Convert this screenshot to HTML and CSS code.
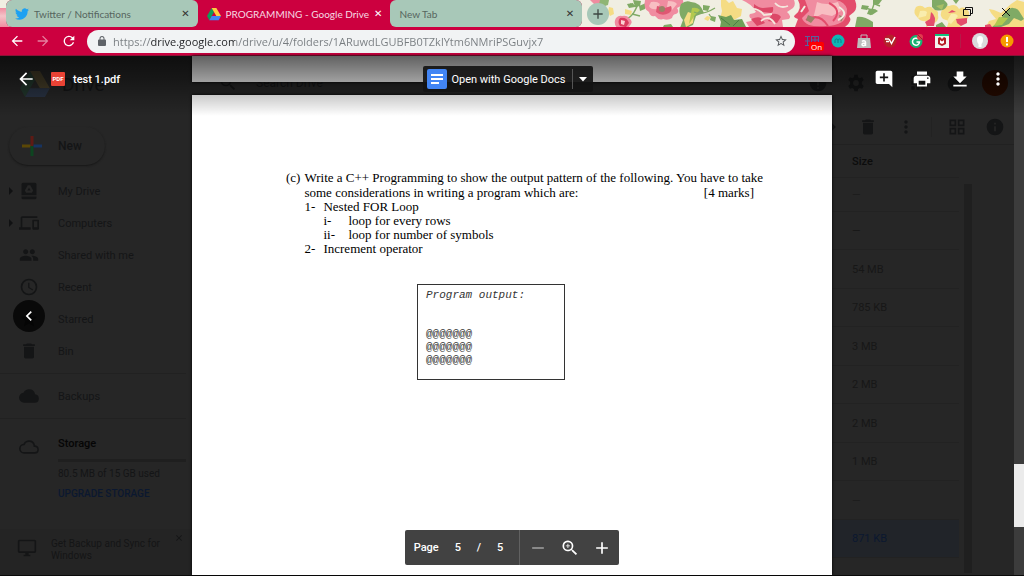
FILE: index.html
```html
<!DOCTYPE html>
<html lang="en">
<head>
    <meta charset="UTF-8">
    <meta name="viewport" content="width=device-width, initial-scale=1.0">
    <title>PROGRAMMING - Google Drive</title>
    <link rel="stylesheet" href="styles.css">
</head>
<body>
    <!-- Shared icons -->
    <svg class="symbols" aria-hidden="true">
        <symbol id="i-back" viewBox="0 0 24 24"><path d="M20 11H7.83l5.59-5.59L12 4l-8 8 8 8 1.41-1.41L7.83 13H20v-2z"/></symbol>
        <symbol id="i-close" viewBox="0 0 24 24"><path d="M19 6.41L17.59 5 12 10.59 6.41 5 5 6.41 10.59 12 5 17.59 6.41 19 12 13.41 17.59 19 19 17.59 13.41 12z"/></symbol>
        <symbol id="i-plus" viewBox="0 0 24 24"><path d="M19 13h-6v6h-2v-6H5v-2h6V5h2v6h6v2z"/></symbol>
        <symbol id="i-more" viewBox="0 0 24 24"><path d="M12 8c1.1 0 2-.9 2-2s-.9-2-2-2-2 .9-2 2 .9 2 2 2zm0 2c-1.1 0-2 .9-2 2s.9 2 2 2 2-.9 2-2-.9-2-2-2zm0 6c-1.1 0-2 .9-2 2s.9 2 2 2 2-.9 2-2-.9-2-2-2z"/></symbol>
        <symbol id="i-bin" viewBox="0 0 24 24"><path d="M6 19c0 1.1.9 2 2 2h8c1.1 0 2-.9 2-2V7H6v12zM19 4h-3.5l-1-1h-5l-1 1H5v2h14V4z"/></symbol>
        <symbol id="i-drive" viewBox="0 0 24 21"><path fill="#0f9d58" d="M8 0l4 7-8 14-4-7z"/><path fill="#ffcd40" d="M8 0h8l8 14h-8z"/><path fill="#4285f4" d="M8 14h16l-4 7H4z"/></symbol>
    </svg>

    <header class="tabstrip">
        <svg class="theme" viewBox="574 0 450 27" preserveAspectRatio="xMaxYMin slice" aria-hidden="true">
            <rect x="574" width="450" height="27" fill="#f0eee2"/>
            <path fill="#f08ca0" d="M590 0h12l-2 4-5 1z"/>
            <path fill="#8fb574" d="M600 0h9l-1 5-6 2-3-3z"/>
            <path fill="#f5dc84" d="M609 7l4 1 1 6-4 2-2-4zM625 9l7 2-1 4-6-1z"/>
            <path fill="none" stroke="#80aa65" stroke-width="1.5" d="M625 19c7-1 10-8 14-17M632 14l8 2M637 7l-7-3"/>
            <path fill="#80aa65" d="M633 0l8 1-1 5-5 1zM639 6l7-3-1 6-5 2zM627 4l6-1 2 4-6 1z"/>
            <path fill="#f08ca0" d="M616 18q3-3 6-2 5-1 7 2 4 3 2 6l-3 4h-11q-4-5-1-10z"/>
            <path fill="#d93d5e" d="M620 18q7-1 9 5l-3 4-6-1q-3-4 0-8z"/><path fill="#fbd0d2" d="M621 20l4 1-1 4-3-1z"/>
            <path fill="#f08ca0" d="M645 0h38q1 4-2 6l-4 2q3 4-1 6-3 0-4 4-4 3-9 1-4 2-8-3-5 1-6-4-6-3-4-12z"/>
            <path fill="#f8bec2" d="M651 2q6-1 9 2l-3 5q-6 1-8-3zM668 1q7 0 9 3l-5 6-5-3z"/>
            <path fill="#df5772" d="M657 6l8 2 6-2q2 4-2 7-7 4-13-1z"/><circle cx="662" cy="9" r="3" fill="#998367"/>
            <path fill="#80aa65" d="M681 4q5-4 10-2 9 0 13 11l-8 3-3 9-7 3h-6l3-8q-6-7-2-16z"/>
            <path fill="#f5dc84" d="M688 12l6 2-1 9-7 4-2-7z"/><path fill="#b2c94f" d="M692 8q5-1 8 2l-5 5-6 9z"/>
            <path fill="none" stroke="#80aa65" stroke-width="1.3" d="M694 12q8 4 21-4M709 14l4 6"/>
            <path fill="#80aa65" d="M703 5l7 1-2 5-5-1zM711 16l5 1-1 5-5-2zM664 25l7-1 2 3h-10z"/>
            <path fill="#f5dc84" d="M721 0h5l3 3 4-2 4 7 5 1-1 7-7 4-7-2-7 1 2-8-1-5zM707 16l4 1-3 4-4-2z"/>
            <path fill="#6f9e57" d="M718 15l8 2 5-2 3 5 8-1 4 8h-26l1-5z"/>
            <path stroke="#4c7e44" d="M721 18l9 7M739 20l-6 6"/>
            <path fill="#f08ca0" d="M741 0h53q2 5-1 8l-6 4q5 4 2 7l-7 1 1 7h-34l-3-5q7-1 6-3-4-2-2-5 8-1 5-4-4-6-13-10z"/>
            <path fill="#dc4867" d="M754 4q5 4 9 4l10-1q1 5-2 6l-8-1-9-2zM772 14q6-1 9 3l-4 6-9-2zM751 19q7-3 10-1l4 5-8 3z"/>
            <path fill="none" stroke="#f4e7dd" stroke-width="1.8" d="M750 9q9-1 14 6l8-1M775 3q5 6 13 3M761 21q8-7 14 3"/>
            <path fill="#e34d6b" d="M798 0h57q3 8-1 12l-5 4q4 5-4 11h-50l3-8q-6-2-3-4 8-6 3-15z"/>
            <path fill="#f08ca0" d="M805 0h31q9 2 11 9 0 9-5 13-7 4-15 4-12 1-18-1-6-3-7-7l7-7z"/>
            <path fill="#f8bec2" d="M817 2q9 4 21 0l3 9-9 5-10-2-9 5 2-8z"/>
            <path fill="none" stroke="#e34d6b" stroke-width="2" d="M829 3q14 7 4 18M806 20q13-8 22 6"/>
            <path fill="#998367" d="M808 15l7 3-4 5-5-3zM839 15l5 2-3 5z"/>
            <path fill="none" stroke="#f0eee2" stroke-width="2" d="M839 7q11 7-1 13M805 6l-4 6"/>
            <path fill="#80aa65" d="M862 5l7 1-2 4-6-1zM869 9q6-1 9 2l-6 4-5-1zM873 0h9l-3 4-6 1zM857 17q7-1 16 5v5h-18z"/>
            <path fill="none" stroke="#80aa65" stroke-width="1.4" d="M862 7l10 3 3-9M872 10l-2 5M875 4l5 2"/>
            <path fill="#f5dc84" d="M916 7q5-3 9 1 6-3 8 1 6 1 5 6 2 6-7 10l-5 2 1-6q-6 1-9-3-6-5-2-11zM942 10q4-5 7-4 7-3 10 3 5-4 10 3 1 6-5 10l-4 5h-13l2-6-6-2q-4-4-1-9z"/>
            <path fill="#e34d6b" d="M931 12q6 4 3 14h-7l-2-4 5-3zM956 19l11-1v5l-6 3-4-3zM948 13l4-3 4 2z"/>
            <path fill="#f9edad" d="M920 11q5-1 7 1l-1 4-8 2zM951 14q5-1 7 2l-7 8-4-3z"/>
            <path fill="#80aa65" d="M932 0h12q5 4 3 6-3 6-12 4l-3-3zM936 25l6-3 4 5h-10zM953 0h6l-3 4z"/>
            <path fill="#a8bf66" d="M936 6l8-2-2 6z"/>
            <path fill="#f5dc84" d="M989 9l5 1 7 3 10-9 6-4 7 2v25h-38l3-6 7-2-5-6z"/>
            <path fill="#80aa65" d="M1005 13q6-6 8-5 4 0 6 3l5 8-3 2-7-3-5 6-8 3h-9l6-5z"/>
            <path fill="#b2c94f" d="M999 17l9 1-6 7-8 1z"/><path fill="#e34d6b" d="M985 25l5-1 2 3h-7z"/>
        </svg>
        <nav class="tabs">
            <a class="tab" href="#twitter">
                <svg class="icon14" viewBox="0 0 24 24" fill="#1da1f2"><path d="M23.9 4.6a10 10 0 0 1-2.8.8 4.9 4.9 0 0 0 2.1-2.7c-.9.5-2 1-3.1 1.2a4.9 4.9 0 0 0-8.4 4.5C7.7 8.2 4 6.1 1.7 3.200a4.800 4.800 0 0 0 1.500 6.500c-.8 0-1.600-.2-2.200-.6v.1c0 2.400 1.700 4.400 3.900 4.800a5 5 0 0 1-2.200.1 4.900 4.900 0 0 0 4.600 3.400A9.900 9.900 0 0 1 0 19.500 14 14 0 0 0 7.600 21.700c9 0 14-7.500 14-14v-.6a10 10 0 0 0 2.300-2.500z"/></svg>
                <span>Twitter / Notifications</span>
            </a>
            <a class="tab active" href="#drive">
                <svg class="icon14"><use href="#i-drive"/></svg>
                <span>PROGRAMMING - Google Drive</span>
            </a>
            <a class="tab" href="#newtab"><span>New Tab</span></a>
        </nav>
        <button class="new-tab" aria-label="New tab"><svg class="icon16"><use href="#i-plus"/></svg></button>
        <div class="window-buttons">
            <button aria-label="Restore"><svg class="icon10" viewBox="0 0 10 10" fill="none" stroke="#111"><path d="M2.500 2.500V.5h7v6h-2M.5 2.500h7v6h-7z"/></svg></button>
            <button aria-label="Close window"><svg class="icon10" viewBox="0 0 10 10" fill="none" stroke="#111"><path d="M1 1l8 8M9 1L1 9"/></svg></button>
        </div>
    </header>

    <div class="toolbar">
        <button aria-label="Back"><svg class="icon16"><use href="#i-back"/></svg></button>
        <button class="forward" aria-label="Forward"><svg class="icon16" viewBox="0 0 24 24"><path d="M12 4l-1.410 1.410L16.170 11H4v2h12.170l-5.580 5.590L12 20l8-8z"/></svg></button>
        <button aria-label="Reload"><svg class="icon16" viewBox="0 0 24 24"><path d="M17.650 6.350A8 8 0 1 0 19.730 14h-2.080A6 6 0 1 1 12 6c1.660 0 3.140.69 4.220 1.780L13 11h7V4l-2.350 2.350z"/></svg></button>
        <div class="omnibox">
            <svg class="icon10" viewBox="0 0 16 20" fill="#5f6368"><path fill-rule="evenodd" d="M14 7h-1V5A5 5 0 0 0 3 5v2H2a2 2 0 0 0-2 2v9a2 2 0 0 0 2 2h12a2 2 0 0 0 2-2V9a2 2 0 0 0-2-2zM5 7V5a3 3 0 0 1 6 0v2z"/></svg>
            <input class="url" type="text" aria-label="Address" value="https://drive.google.com/drive/u/4/folders/1ARuwdLGUBFB0TZklYtm6NMriPSGuvjx7">
            <button aria-label="Bookmark"><svg class="icon14" viewBox="0 0 24 24" fill="#55585c"><path fill-rule="evenodd" d="M22 9.240l-7.190-.62L12 2 9.190 8.630 2 9.240l5.460 4.730L5.820 21 12 17.270 18.180 21l-1.630-7.030L22 9.240zM12 15.400l-3.760 2.270 1-4.280-3.320-2.880 4.380-.38L12 6.100l1.710 4.040 4.380.38-3.320 2.880 1 4.280L12 15.400z"/></svg></button>
        </div>
        <div class="extensions">
            <button class="ext-on" aria-label="Grid extension">
                <svg class="icon14" viewBox="0 0 14 14" fill="none" stroke="#58629c"><path d="M0 2.500h5M2.500 2v9M0 7h5M0 11.500h4M6.500 2v8M10 2v8M13.500 2v8M6 2.500h8M6 6h8M6 9.500h8"/></svg>
                <span>On</span>
            </button>
            <button aria-label="Momentum"><svg class="icon14" viewBox="0 0 14 14"><circle cx="7" cy="7" r="6.500" fill="#0fb5b5"/><path fill="none" stroke="#087f88" d="M4 9V6.500c0-2 3-2 3 0V9M7 6.500c0-2 3-2 3 0V9"/></svg></button>
            <button aria-label="Shopping"><svg class="icon14" viewBox="0 0 14 14"><path fill="#bdbdbd" d="M1 4h12l1 10H0z"/><path fill="none" stroke="#bdbdbd" d="M4 5V1h6v4"/><path fill="none" stroke="#fff" stroke-width="1.500" d="M5 7.500c1-1 3.500-1 3.500.7V12M8.500 9.200c-2-.2-3.500.1-3.500 1.300 0 1.600 2.500 1.500 3.500 0"/></svg></button>
            <button aria-label="Video"><svg class="icon14" viewBox="0 0 14 14"><circle cx="7" cy="7" r="6.500" fill="#b5202b"/><path fill="none" stroke="#fff" stroke-width="1.500" d="M2 5h4M3 7.500h3M6 5l2.500 4.500L12 3"/></svg></button>
            <button aria-label="Grammar"><svg class="icon14" viewBox="0 0 14 14"><circle cx="7" cy="7.500" r="6.500" fill="#18b172"/><path fill="none" stroke="#fff" stroke-width="1.500" d="M9 4.800A3.500 3.500 0 1 0 10.500 8H7.500"/><circle cx="11" cy="3" r="3" fill="#e03c4e"/><path stroke="#99242f" d="M9 1l4 4"/></svg></button>
            <button aria-label="Web advisor"><svg class="icon14" viewBox="0 0 14 14"><path fill="#f4f1ef" d="M0 0h14v14H0z"/><path fill="#13c07c" d="M0 0h14v2H0z"/><path fill="#b51c26" d="M3 4l2-1 2 2 2-2 2 1v6l-4 2-4-2z"/><path fill="#fff" d="M5 6l2 1.500L9 6v3L7 10 5 9z"/></svg></button>
            <i class="ext-divider"></i>
            <button aria-label="Profile"><svg class="icon16" viewBox="0 0 16 16"><circle cx="8" cy="8" r="8" fill="#d9dadc"/><path fill="#fff" d="M5 6a3 3 0 0 1 6 0c0 3-.6 4-1.500 5v3h-3v-3C5.500 10 5 9 5 6z"/></svg></button>
            <button aria-label="Update"><svg class="icon14" viewBox="0 0 14 14"><circle cx="7" cy="7" r="6.500" fill="#f59b00"/><path fill="#fff" d="M6 3h2v5H6zM6 9.500h2v2H6z"/></svg></button>
        </div>
    </div>

    <main class="screen">
        <!-- Drive page, dimmed by the file viewer -->
        <div class="drive">
            <aside class="sidebar">
                <div class="brand"><svg class="logo"><use href="#i-drive"/></svg><span>Drive</span></div>
                <button class="new-button">
                    <svg class="icon20" viewBox="0 0 20 20"><path fill="#5e1a14" d="M8.500 0h3v10h-3z"/><path fill="#5a4706" d="M0 8.500h8.500v3H0z"/><path fill="#0d4520" d="M8.500 10h3v10h-3z"/><path fill="#17335f" d="M11.500 8.500H20v3h-8.500z"/></svg>
                    <span>New</span>
                </button>
                <nav class="folders">
                    <a class="expand" href="#my-drive"><svg class="icon20" viewBox="0 0 24 24"><path d="M5 2h14a2 2 0 0 1 2 2v13H3V4c0-1.100.9-2 2-2zm5.500 3L7 11.500 8.500 14h7l1.500-2.500L13.500 5zm1.500 3l2 3.500h-4z" fill-rule="evenodd"/><path d="M3 18.500h18V20a2 2 0 0 1-2 2H5a2 2 0 0 1-2-2z"/></svg><span>My Drive</span></a>
                    <a class="expand" href="#computers"><svg class="icon20" viewBox="0 0 24 24"><path d="M4 6h18V4H4c-1.100 0-2 .9-2 2v11H0v3h14v-3H4V6zm19 2h-6c-.55 0-1 .45-1 1v10c0 .55.45 1 1 1h6c.55 0 1-.45 1-1V9c0-.55-.45-1-1-1zm-1 9h-4v-7h4v7z"/></svg><span>Computers</span></a>
                    <a href="#shared"><svg class="icon20" viewBox="0 0 24 24"><path d="M16 11c1.660 0 3-1.340 3-3s-1.340-3-3-3-3 1.340-3 3 1.340 3 3 3zm-8 0c1.660 0 3-1.340 3-3S9.660 5 8 5 5 6.340 5 8s1.340 3 3 3zm0 2c-2.330 0-7 1.170-7 3.500V19h14v-2.500C15 14.170 10.330 13 8 13zm8 0c-.29 0-.62.02-.97.050 1.160.84 1.970 1.970 1.970 3.450V19h6v-2.500c0-2.330-4.670-3.500-7-3.500z"/></svg><span>Shared with me</span></a>
                    <a href="#recent"><svg class="icon20" viewBox="0 0 24 24"><path d="M12 2a10 10 0 1 0 0 20 10 10 0 0 0 0-20zm0 18a8 8 0 1 1 0-16 8 8 0 0 1 0 16zm.5-13H11v6l5.200 3.200.8-1.300-4.500-2.700V7z" fill-rule="evenodd"/></svg><span>Recent</span></a>
                    <a href="#starred"><svg class="icon20" viewBox="0 0 24 24"><path d="M12 17.270L18.180 21l-1.640-7.030L22 9.240l-7.190-.61L12 2 9.190 8.630 2 9.240l5.460 4.730L5.820 21z"/></svg><span>Starred</span></a>
                    <a href="#bin"><svg class="icon20"><use href="#i-bin"/></svg><span>Bin</span></a>
                </nav>
                <a class="backups" href="#backups"><svg class="icon20" viewBox="0 0 24 24"><path d="M19.350 10.040A7.490 7.490 0 0 0 12 4C9.110 4 6.600 5.640 5.350 8.040A6 6 0 0 0 6 20h13a5 5 0 0 0 .35-9.960z"/></svg><span>Backups</span></a>
                <section class="storage">
                    <svg class="icon20" viewBox="0 0 24 24"><path fill-rule="evenodd" d="M19.350 10.040A7.490 7.490 0 0 0 12 4C9.110 4 6.600 5.640 5.350 8.040A6 6 0 0 0 6 20h13a5 5 0 0 0 .35-9.960zM19 18H6a4 4 0 0 1 0-8h.7a5.500 5.500 0 0 1 10.800 1.500v.5H19a3 3 0 0 1 0 6z"/></svg>
                    <div>
                        <h2>Storage</h2>
                        <div class="storage-bar"></div>
                        <p>80.5 MB of 15 GB used</p>
                        <a href="#upgrade">UPGRADE STORAGE</a>
                    </div>
                </section>
                <section class="promo">
                    <svg class="icon20" viewBox="0 0 24 24"><path d="M21 2H3c-1.100 0-2 .9-2 2v12c0 1.100.9 2 2 2h7v2H8v2h8v-2h-2v-2h7c1.100 0 2-.9 2-2V4c0-1.100-.9-2-2-2zm0 14H3V4h18v12z"/></svg>
                    <p>Get Backup and Sync for Windows</p>
                    <button aria-label="Dismiss"><svg class="icon10"><use href="#i-close"/></svg></button>
                </section>
            </aside>
            <section class="files">
                <div class="files-header">
                    <svg class="icon20" viewBox="0 0 24 24"><path d="M15.500 14h-.79l-.28-.27a6.500 6.500 0 1 0-.7.7l.27.28v.79l5 4.990L20.490 19l-4.990-5zm-6 0a4.500 4.500 0 1 1 0-9 4.500 4.500 0 0 1 0 9z"/></svg>
                    <span class="search">Search Drive</span>
                    <svg class="icon20" viewBox="0 0 24 24"><path fill-rule="evenodd" d="M12 2a10 10 0 1 0 0 20 10 10 0 0 0 0-20zm1 17h-2v-2h2zm0-4h-2V7h2z"/></svg>
                    <svg class="icon20" viewBox="0 0 24 24"><path fill-rule="evenodd" d="M10 2h4l.5 3 2 1.200L19.300 5l2 3.500-2.300 2v3l2.300 2-2 3.500-2.800-1.100-2 1.200L14 22h-4l-.5-2.900-2-1.200L4.700 19l-2-3.500L5 13.500v-3l-2.300-2 2-3.500 2.800 1.200 2-1.200zm2 6.500a3.500 3.500 0 1 0 0 7 3.500 3.500 0 0 0 0-7z"/></svg>
                    <svg class="icon20 apps" viewBox="0 0 24 24"><path d="M4 8h4V4H4zm6 12h4v-4h-4zm-6 0h4v-4H4zm0-6h4v-4H4zm6 0h4v-4h-4zm6-10v4h4V4zm-6 4h4V4h-4zm6 6h4v-4h-4zm0 6h4v-4h-4z"/></svg>
                    <svg class="icon20" viewBox="0 0 24 24"><circle cx="11" cy="13" r="9"/></svg>
                    <i class="avatar"></i>
                </div>
                <div class="files-tools">
                    <svg class="icon20" viewBox="0 0 24 24"><path d="M12 5l7 7-7 7z"/></svg>
                    <button aria-label="Remove"><svg class="icon20"><use href="#i-bin"/></svg></button>
                    <button aria-label="More actions"><svg class="icon20"><use href="#i-more"/></svg></button>
                    <i class="tools-divider"></i>
                    <button aria-label="Grid view"><svg class="icon20" viewBox="0 0 24 24"><path fill-rule="evenodd" d="M3 3h8v8H3zm2 2v4h4V5zM13 3h8v8h-8zm2 2v4h4V5zM3 13h8v8H3zm2 2v4h4v-4zM13 13h8v8h-8zm2 2v4h4v-4z"/></svg></button>
                    <button aria-label="View details"><svg class="icon20" viewBox="0 0 24 24"><path fill-rule="evenodd" d="M12 2a10 10 0 1 0 0 20 10 10 0 0 0 0-20zm1 15h-2v-6h2v6zm0-8h-2V7h2v2z"/></svg></button>
                </div>
                <div class="list">
                    <table>
                        <thead><tr><th>Size</th></tr></thead>
                        <tbody>
                            <tr><td class="faint">—</td></tr>
                            <tr><td>—</td></tr>
                            <tr><td>54 MB</td></tr>
                            <tr><td>785 KB</td></tr>
                            <tr><td>3 MB</td></tr>
                            <tr><td>2 MB</td></tr>
                            <tr><td>2 MB</td></tr>
                            <tr><td>1 MB</td></tr>
                            <tr><td class="faint">—</td></tr>
                            <tr class="selected"><td>871 KB</td></tr>
                        </tbody>
                    </table>
                    <div class="list-scroll"></div>
                </div>
            </section>
        </div>

        <!-- File viewer -->
        <div class="viewer">
            <div class="pages">
                <div class="page previous"></div>
                <article class="page">
                    <div class="question">
                        <span>(c)</span>
                        <div>
                            <p>Write a C++ Programming to show the output pattern of the following. You have to take</p>
                            <p class="marks"><span>some considerations in writing a program which are:</span><span>[4 marks]</span></p>
                            <ul>
                                <li><b>1-</b>Nested FOR Loop
                                    <ul>
                                        <li><b>i-</b>loop for every rows</li>
                                        <li><b>ii-</b>loop for number of symbols</li>
                                    </ul>
                                </li>
                                <li><b>2-</b>Increment operator</li>
                            </ul>
                        </div>
                    </div>
                    <div class="output">
                        <em>Program output:</em>
                        <pre>@@@@@@@
@@@@@@@
@@@@@@@</pre>
                    </div>
                </article>
            </div>
            <div class="scrollbar"><div class="thumb"></div></div>

            <header class="viewer-header">
                <div class="file-name">
                    <button aria-label="Close viewer"><svg class="icon20"><use href="#i-back"/></svg></button>
                    <b class="pdf">PDF</b>
                    <span>test 1.pdf</span>
                </div>
                <div class="open-with">
                    <button class="open-main">
                        <svg class="icon20" viewBox="0 0 20 20"><rect width="20" height="20" rx="2" fill="#4285f4"/><path fill="#fff" d="M4 5h12v2H4zM4 9h12v2H4zM4 13h8v2H4z"/></svg>
                        <span>Open with Google Docs</span>
                    </button>
                    <button class="open-more" aria-label="Other apps"><svg class="icon10" viewBox="0 0 10 10"><path d="M1 3h8L5 7.500z"/></svg></button>
                </div>
                <div class="actions">
                    <button aria-label="Add comment"><svg class="icon20" viewBox="0 0 24 24"><path d="M22 4c0-1.100-.9-2-2-2H4c-1.100 0-2 .9-2 2v12c0 1.100.9 2 2 2h14l4 4V4zm-5 7h-4v4h-2v-4H7V9h4V5h2v4h4v2z"/></svg></button>
                    <button aria-label="Print"><svg class="icon20" viewBox="0 0 24 24"><path d="M19 8H5c-1.660 0-3 1.340-3 3v6h4v4h12v-4h4v-6c0-1.660-1.340-3-3-3zm-3 11H8v-5h8v5zm3-7c-.55 0-1-.45-1-1s.45-1 1-1 1 .45 1 1-.45 1-1 1zm-1-9H6v4h12V3z"/></svg></button>
                    <button aria-label="Download"><svg class="icon20" viewBox="0 0 24 24"><path d="M20 9h-4V3H8v6H4l8 8zM4 19v2h16v-2z"/></svg></button>
                    <button aria-label="More"><svg class="icon20"><use href="#i-more"/></svg></button>
                </div>
            </header>

            <button class="previous-file" aria-label="Previous file"><svg class="icon20" viewBox="0 0 24 24"><path d="M15.400 7.400L14 6l-6 6 6 6 1.400-1.400L10.800 12z"/></svg></button>

            <div class="page-bar">
                <label for="page-number">Page</label>
                <input id="page-number" type="text" value="5">
                <span>/</span>
                <span>5</span>
                <div class="zoom">
                    <button class="disabled" aria-label="Zoom out"><svg class="icon20" viewBox="0 0 24 24"><path d="M5 11h14v2H5z"/></svg></button>
                    <button aria-label="Fit to width"><svg class="icon20" viewBox="0 0 24 24"><path d="M15.500 14h-.79l-.28-.27a6.500 6.500 0 1 0-.7.7l.27.28v.79l5 4.990L20.490 19l-4.990-5zm-6 0a4.500 4.500 0 1 1 0-9 4.500 4.500 0 0 1 0 9zM10 7H9v2H7v1h2v2h1v-2h2V9h-2z"/></svg></button>
                    <button aria-label="Zoom in"><svg class="icon20"><use href="#i-plus"/></svg></button>
                </div>
            </div>
        </div>
    </main>
</body>
</html>
```
FILE: styles.css
```css
* {
    box-sizing: border-box;
}

body {
    margin: 0;
    height: 100vh;
    display: flex;
    flex-direction: column;
    overflow: hidden;
    font-family: Roboto, sans-serif;
    font-size: 11px;
}

button {
    display: flex;
    align-items: center;
    justify-content: center;
    padding: 0;
    border: none;
    background: none;
    color: inherit;
    font: inherit;
    cursor: pointer;
}

a {
    color: inherit;
    text-decoration: none;
}

h2, p, ul, pre {
    margin: 0;
    padding: 0;
}

svg {
    display: block;
    flex: none;
}

svg:not([fill]) {
    fill: currentColor;
}

.symbols {
    position: absolute;
    width: 0;
    height: 0;
}

.icon10 { width: 10px; height: 10px; }
.icon14 { width: 14px; height: 14px; }
.icon16 { width: 16px; height: 16px; }
.icon20 { width: 20px; height: 20px; }

/* Tab strip */
.tabstrip {
    position: relative;
    display: flex;
    align-items: center;
    height: 27px;
    padding-left: 6px;
    background: linear-gradient(#f0eee2 8px, #f08ca0 8px, #f3c4c8 16px, #f08ca0);
}

.theme {
    position: absolute;
    top: 0;
    right: 0;
    width: 450px;
    height: 27px;
}

.tabs {
    position: relative;
    display: flex;
    flex: 0 1 576px;
    height: 27px;
    background: #cc003f;
    border-radius: 6px;
}

.tab {
    display: flex;
    flex: 1;
    align-items: center;
    gap: 5px;
    padding: 0 8px 0 9px;
    border-radius: 6px;
    background: #a8c8b8;
    color: #56655e;
    font: 10px Lato, sans-serif;
    white-space: nowrap;
}

.tab::after {
    content: "✕";
    margin-left: auto;
    color: #333;
    font: 10px "DejaVu Sans", sans-serif;
}

.tab.active {
    background: #cc003f;
    color: #f6dbe3;
}

.tab.active::after {
    color: #fff;
}

.new-tab {
    position: relative;
    width: 22px;
    height: 22px;
    margin-left: 5px;
    border-radius: 50%;
    background: #a8c8b8;
    color: #3c4742;
}

.window-buttons {
    position: relative;
    display: flex;
    gap: 28px;
    margin: 0 13px 4px auto;
}

/* Toolbar */
.toolbar {
    display: flex;
    align-items: center;
    gap: 10px;
    height: 29px;
    padding: 0 10px 0 9px;
    background: #cc003f;
    color: #fff;
    border-bottom: 1px solid #8d1236;
}

.forward {
    opacity: 0.5;
}

.omnibox {
    display: flex;
    flex: 1;
    align-items: center;
    gap: 6px;
    height: 23px;
    padding: 0 7px 0 10px;
    border-radius: 12px;
    background: #f1f3f4;
}

/* The host part of the address is darker than the rest */
.url {
    flex: 1;
    min-width: 0;
    padding: 0;
    border: none;
    outline: none;
    background: linear-gradient(90deg, #777c80 37px, #202124 37px, #202124 122px, #777c80 122px);
    -webkit-background-clip: text;
    background-clip: text;
    color: transparent;
    font: 11px "Open Sans", sans-serif;
}

.extensions {
    display: flex;
    align-items: center;
    gap: 12px;
}

.ext-on {
    position: relative;
}

.ext-on span {
    position: absolute;
    left: 4px;
    top: 8px;
    padding: 0 2px;
    border-radius: 2px;
    background: #f00;
    font: 8px/9px "Open Sans", sans-serif;
}

.ext-divider {
    width: 1px;
    height: 14px;
    margin: 0 -1px;
    background: #b51a47;
}

/* Drive page */
.screen {
    position: relative;
    flex: 1;
    min-height: 0;
    background: #262626;
}

.drive {
    display: grid;
    grid-template-columns: 192px 1fr;
    height: 100%;
    overflow: hidden;
    color: #141516;
}

.brand {
    display: flex;
    align-items: center;
    gap: 12px;
    height: 56px;
    padding-left: 20px;
    font-size: 19px;
}

.logo {
    width: 30px;
    height: 26px;
    opacity: 0.15;
}

.new-button {
    justify-content: flex-start;
    gap: 16px;
    width: 96px;
    height: 38px;
    margin: 15px 0 10px 9px;
    padding-left: 13px;
    border-radius: 19px;
    box-shadow: 0 1px 2px #171717;
    font-size: 12px;
    font-weight: 500;
}

.folders a,
.backups {
    display: flex;
    align-items: center;
    gap: 19px;
    height: 32px;
    padding-left: 19px;
    color: #141516;
}

.folders .expand {
    padding-left: 9px;
}

.expand::before {
    content: "";
    border: 4px solid transparent;
    border-left-color: #101112;
    border-right: none;
    margin-right: -13px;
}

.backups {
    height: 46px;
    margin: 6px 6px 0 0;
    border-top: 1px solid #212121;
    border-bottom: 1px solid #212121;
}

.storage {
    display: flex;
    gap: 19px;
    padding: 18px 6px 28px 19px;
    line-height: 14px;
}

.storage > div {
    flex: 1;
}

.storage h2 {
    font-size: 11px;
    font-weight: 500;
    color: #050505;
}

.storage-bar {
    height: 3px;
    margin: 8px 0 5px;
    background: #1f1f1f;
}

.storage p,
.promo p {
    font-size: 10px;
}

.storage a {
    display: block;
    margin-top: 6px;
    font-size: 10px;
    font-weight: 500;
    color: #0b1830;
}

.promo {
    display: flex;
    gap: 14px;
    height: 48px;
    padding: 9px 8px 0 17px;
    background: #242424;
    line-height: 12px;
}

.promo p {
    flex: 1;
}

.promo button {
    height: 0;
    margin-left: -18px;
}

.files {
    padding-right: 16px;
    min-width: 0;
}

.files-header,
.files-tools {
    display: flex;
    align-items: center;
    gap: 18px;
    height: 53px;
}

.files-header {
    padding-left: 26px;
}

.search {
    flex: 1;
    font-size: 12px;
}

.apps {
    margin-left: 24px;
}

.avatar {
    width: 26px;
    height: 26px;
    margin-left: -2px;
    border-radius: 50%;
    background: #240a00;
}

.files-tools {
    justify-content: flex-end;
    height: 36px;
    margin-right: -16px;
    padding-right: 19px;
    border-bottom: 1px solid #212121;
}

.tools-divider {
    width: 1px;
    height: 20px;
    margin: 0 -3px 0 -3px;
    background: #222;
}

.list {
    display: flex;
    align-items: flex-start;
    justify-content: flex-end;
    gap: 5px;
    padding-right: 36px;
}

table {
    width: 130px;
    border-spacing: 0;
}

th, td {
    height: 38px;
    padding: 0 0 0 23px;
    border-bottom: 1px solid #222;
    text-align: left;
    color: #171717;
}

th {
    height: 33px;
    font-weight: 500;
    color: #0c0c0c;
}

tr:nth-child(odd) td {
    height: 39px;
}

tr:first-child td {
    height: 34px;
}

td.faint {
    color: #1c1c1c;
}

.selected td {
    background: #212429;
    color: #0b1830;
}

.list-scroll {
    width: 8px;
    height: 389px;
    margin-top: 39px;
    background: #1f1f1f;
}

/* Viewer */
.viewer {
    position: absolute;
    inset: 0;
    display: flex;
    justify-content: center;
    border-bottom: 1px solid #0a0a0a;
}

.pages {
    display: flex;
    flex-direction: column;
    gap: 13px;
    width: 100%;
    max-width: 640px;
}

.page {
    flex: 1;
    padding: 75px 78px 0 94px;
    background: #fff;
    box-shadow: 0 0 3px #000;
    color: #000;
    font-family: "Liberation Serif", serif;
    font-size: 13px;
}

.page.previous {
    flex: none;
    height: 26px;
    padding: 0;
}

.question {
    display: flex;
    gap: 4px;
    line-height: 15px;
    white-space: nowrap;
}

.question > div {
    flex: 1;
    min-width: 0;
}

.marks {
    display: flex;
    justify-content: space-between;
}

.question ul {
    list-style: none;
    line-height: 14px;
}

.question b {
    display: inline-block;
    width: 19px;
    font-weight: normal;
}

.question ul ul {
    padding-left: 19px;
}

.question ul ul b {
    width: 25px;
}

.output {
    width: 148px;
    margin: 28px 0 0 131px;
    padding: 4px 8px 12px;
    border: 1px solid #333;
    color: #333;
    font: 11px/13px "Liberation Mono", monospace;
}

.output pre {
    margin-top: 26px;
    font: inherit;
}

.scrollbar {
    position: absolute;
    top: 0;
    right: 0;
    bottom: 0;
    display: flex;
    align-items: flex-end;
    width: 10px;
    padding-bottom: 48px;
    background: #3c3c3c;
}

.thumb {
    width: 100%;
    height: 63px;
    background: #ebebeb;
}

.viewer-header {
    position: absolute;
    top: 0;
    left: 0;
    right: 0;
    display: grid;
    grid-template-columns: 1fr auto 1fr;
    align-items: start;
    height: 60px;
    padding: 10px 16px 0;
    background: linear-gradient(rgba(0, 0, 0, 0.62), rgba(0, 0, 0, 0.37) 26px, rgba(0, 0, 0, 0.2) 40px, transparent);
    color: #fff;
}

.file-name,
.actions {
    display: flex;
    align-items: center;
    height: 26px;
    font-weight: 500;
}

.pdf {
    width: 14px;
    margin: 0 8px 0 15px;
    border-radius: 1px;
    background: #ea4335;
    font-size: 6px;
    line-height: 14px;
    text-align: center;
}

.open-with {
    display: flex;
    height: 26px;
    margin-right: 8px;
    padding: 3px 0;
    border-radius: 2px;
    background: rgba(20, 20, 20, 0.92);
}

.open-main {
    gap: 4px;
    padding: 0 6px 0 4px;
}

.open-more {
    width: 21px;
    border-left: 1px solid #555;
}

.actions {
    justify-content: flex-end;
    gap: 18px;
}

.previous-file {
    position: absolute;
    left: 13px;
    top: 244px;
    width: 32px;
    height: 32px;
    border-radius: 50%;
    background: rgba(0, 0, 0, 0.75);
    color: #fff;
}

.page-bar {
    position: absolute;
    bottom: 10px;
    display: flex;
    align-items: center;
    gap: 16px;
    height: 35px;
    padding: 0 7px 0 9px;
    border-radius: 2px;
    background: #424242;
    color: #fff;
    font-weight: 500;
}

.page-bar input {
    width: 6px;
    padding: 0;
    border: none;
    background: none;
    color: inherit;
    font: inherit;
}

.zoom {
    display: flex;
    align-items: center;
    gap: 12px;
    height: 35px;
    padding-left: 8px;
    border-left: 1px solid #616161;
}

.disabled {
    opacity: 0.45;
}
```
